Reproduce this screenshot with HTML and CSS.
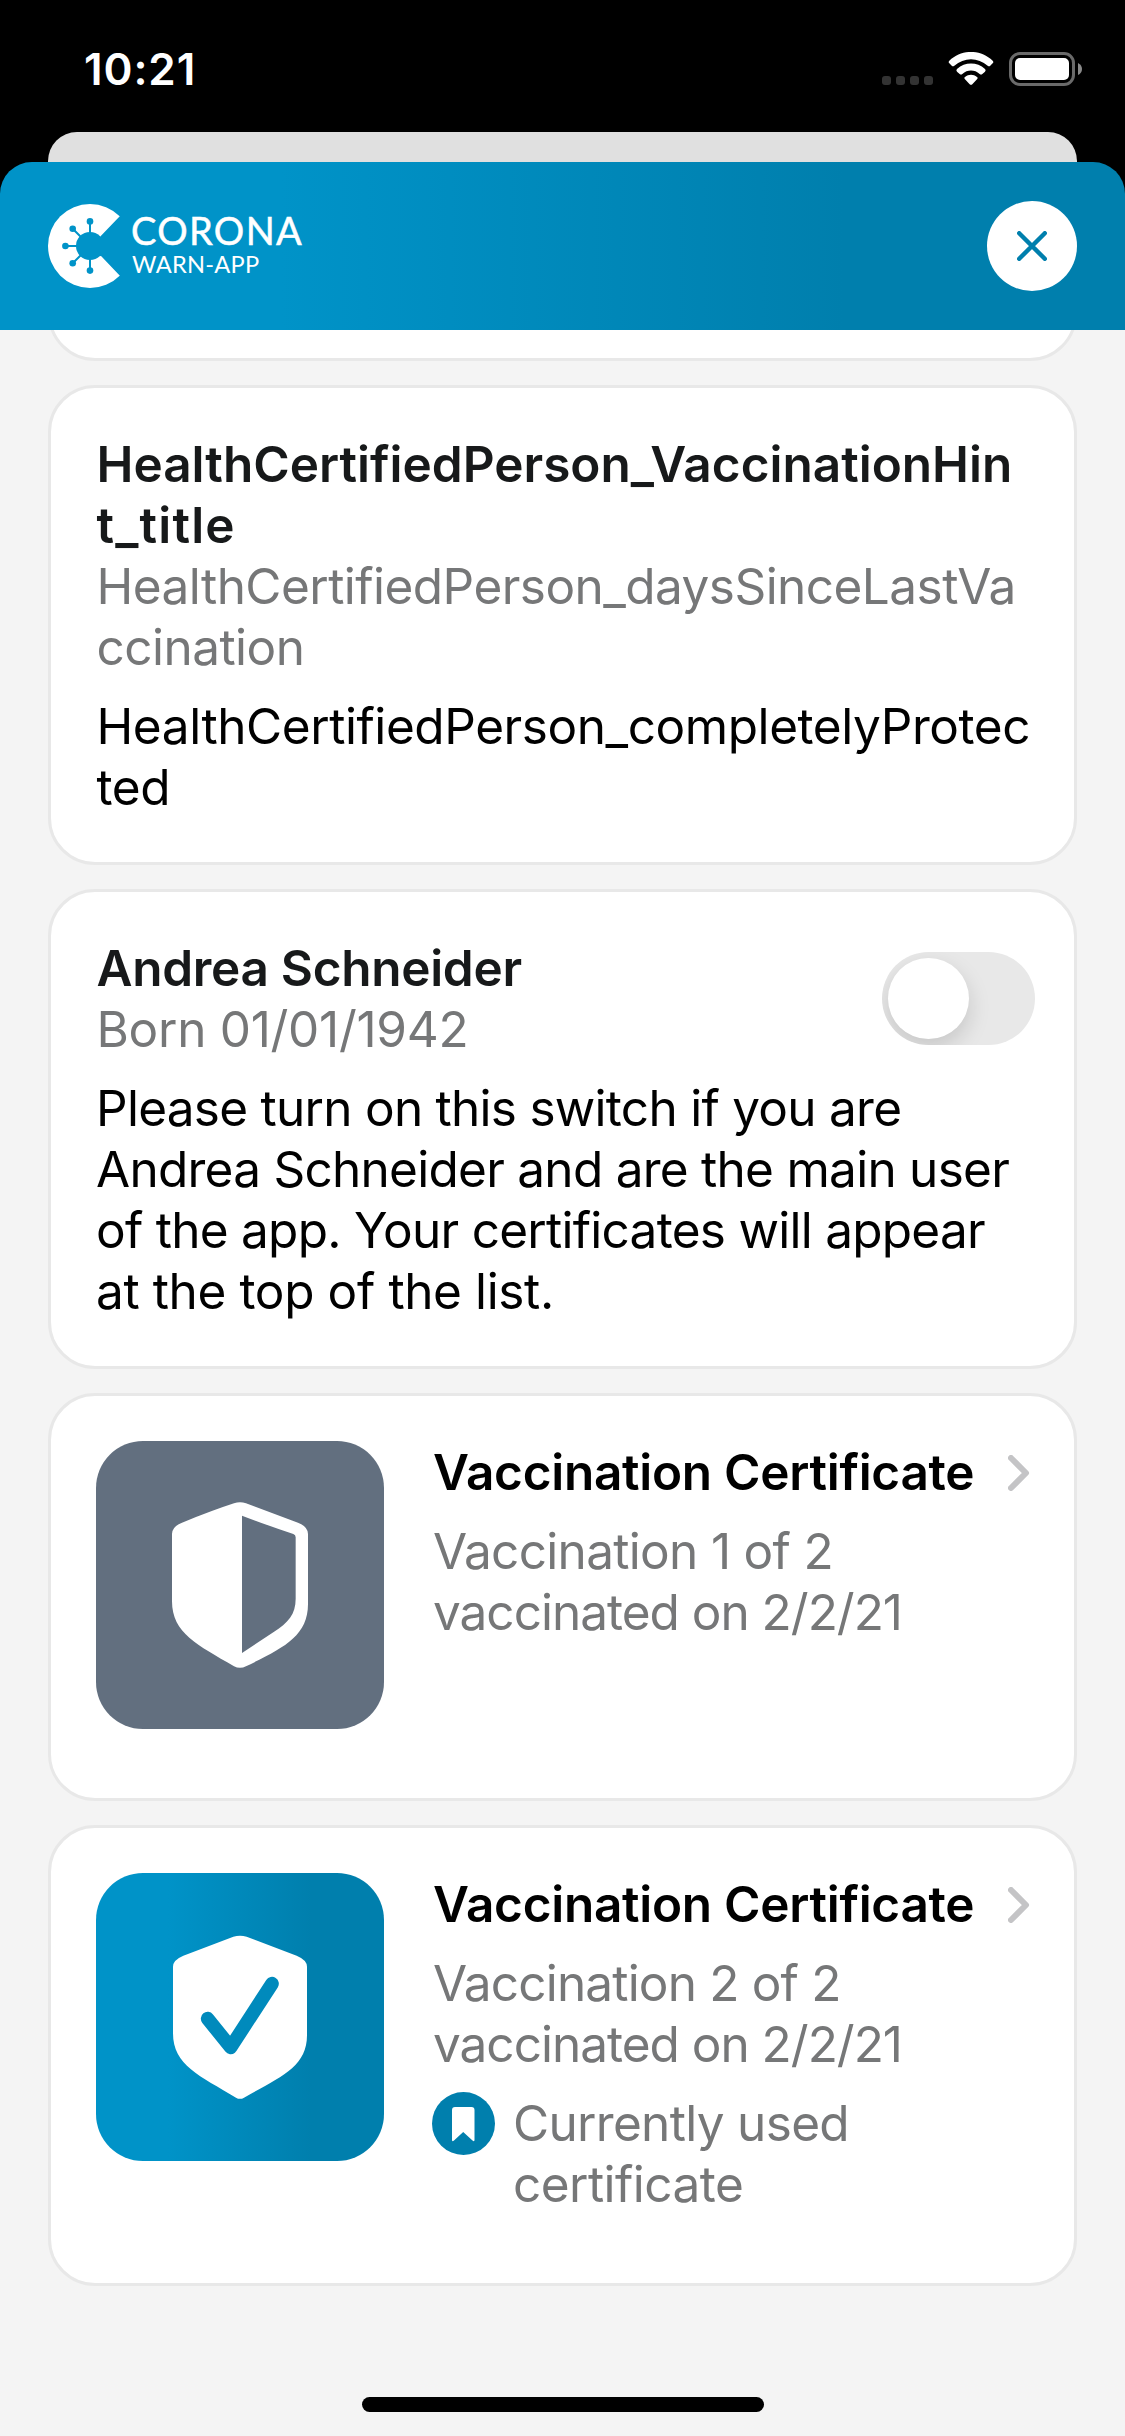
FILE: index.html
```
<!DOCTYPE html>
<html lang="en">
<head>
<meta charset="utf-8">
<title>Corona-Warn-App</title>
<link rel="stylesheet" href="styles.css">
</head>
<body>
<div class="status">
  <span class="time">10:21</span>
  <div class="indicators">
    <div class="dots"><i></i><i></i><i></i><i></i></div>
    <svg class="wifi" viewBox="0 0 138 99">
      <g fill="#fff">
        <path d="M4 26C41-9 97-9 134 26Q138 30 134 34L126 42Q123 44 119 41C90 15 48 15 19 41Q15 44 12 42L4 34Q0 30 4 26Z"/>
        <path d="M27 51C51 29 87 29 111 51Q115 55 111 59L103 66Q99 69 95 66C80 52 58 52 43 66Q39 69 35 66L27 59Q23 55 27 51Z"/>
        <path d="M51 75C62 66 76 66 87 75Q91 78 87 82L73 97Q69 100 65 97L51 82Q47 78 51 75Z"/>
      </g>
    </svg>
    <svg class="battery" viewBox="0 0 73 34">
      <rect x="1.5" y="1.5" width="63" height="31" rx="9.5" fill="none" stroke="#6a6a6a" stroke-width="3"/>
      <rect x="6" y="6" width="54" height="22" rx="5" fill="#fff"/>
      <path d="M69 11Q73 13 73 17T69 23Z" fill="#8a8a8a"/>
    </svg>
  </div>
</div>
<div class="backdrop"></div>
<div class="sheet">
  <header class="header">
    <div class="logo">
      <svg class="mark" viewBox="0 0 84 84">
        <mask id="bite">
          <rect width="84" height="84" fill="#fff"/>
          <g fill="#000" stroke="#000">
            <circle cx="42" cy="42" r="14" stroke="none"/>
            <path d="M52 33L52.8 32Q71 13 74 10H86V74H74L53.3 52.3Q52.3 51.6 51.5 52.3L42 42Z" stroke="none"/>
            <path d="M42 42V17.5M42 42L24.7 24.7M42 42H17.5M42 42L24.7 59.3M42 42V66.5" stroke-width="2"/>
            <circle cx="42" cy="17.4" r="3.3" stroke="none"/>
            <circle cx="24.7" cy="24.7" r="3.3" stroke="none"/>
            <circle cx="17.4" cy="42" r="3.3" stroke="none"/>
            <circle cx="24.7" cy="59.3" r="3.3" stroke="none"/>
            <circle cx="42" cy="66.6" r="3.3" stroke="none"/>
          </g>
        </mask>
        <circle cx="42" cy="42" r="42" fill="#fff" mask="url(#bite)"/>
      </svg>
      <div class="wordmark"><span class="word-top">CORONA</span><span class="word-bottom">WARN-APP</span></div>
    </div>
    <button class="close" aria-label="Close">
      <svg viewBox="0 0 30 30"><path d="M2.2 2.2L27.8 27.8M27.8 2.2L2.2 27.8" stroke="#007fad" stroke-width="4.4" stroke-linecap="round"/></svg>
    </button>
  </header>
  <main class="list">
    <section class="card card-cut"></section>

    <section class="card">
      <div class="text">
        <h2 class="title ls-key">HealthCertifiedPerson_VaccinationHin<br><span class="ls-wide">t_title</span></h2>
        <p class="muted ls-half">HealthCertifiedPerson_daysSinceLastVa<br>ccination</p>
        <p class="body ls-body-key">HealthCertifiedPerson_completelyProtec<br>ted</p>
      </div>
    </section>

    <section class="card">
      <div class="person">
        <div>
          <h2 class="title ls-name">Andrea Schneider</h2>
          <p class="muted ls-born">Born 01/01/1942</p>
        </div>
        <div class="switch"><span class="knob"></span></div>
      </div>
      <p class="body ls-text">Please turn on this switch if you are<br>Andrea Schneider and are the main user<br>of the app. Your certificates will appear<br><span class="ls-last">at the top of the list.</span></p>
    </section>

    <section class="card cert">
      <div class="tile tile-grey">
        <svg viewBox="168 183 864 864">
          <path fill="#fff" fill-rule="evenodd" d="M582 370Q600 363 618 370L774 428Q804 440 804 462V672C804 770 727 805 618 859Q600 868 582 859C473 795 396 760 396 664V462Q396 440 426 428Q520 390 582 370ZM606 407V819L700 757C745 727 767 703 767 656V472Q767 465 760 462Q690 439 606 407Z"/>
        </svg>
      </div>
      <div class="info">
        <div class="head"><h2 class="title black ls-cert">Vaccination Certificate</h2>
          <svg class="chevron" viewBox="0 0 22 36"><path d="M3 3L18 18L3 33"/></svg></div>
        <p class="muted second"><span class="ls-dose">Vaccination 1 of 2</span><br><span class="ls-date">vaccinated on 2/2/21</span></p>
      </div>
    </section>

    <section class="card cert">
      <div class="tile tile-blue">
        <svg viewBox="168 189 864 864">
          <path fill="#fff" d="M580 380Q600 374 620 380L770 437Q801 450 801 470V676C801 772 720 802 612 863Q600 870 588 863C480 798 399 766 399 670V470Q399 450 430 437Z"/>
          <path d="M503 626L572 712L696 521" fill="none" stroke="#008abc" stroke-width="41" stroke-linecap="round" stroke-linejoin="round"/>
        </svg>
      </div>
      <div class="info">
        <div class="head"><h2 class="title black ls-cert">Vaccination Certificate</h2>
          <svg class="chevron" viewBox="0 0 22 36"><path d="M3 3L18 18L3 33"/></svg></div>
        <p class="muted second"><span class="ls-dose2">Vaccination 2 of 2</span><br><span class="ls-date">vaccinated on 2/2/21</span></p>
        <div class="used">
          <svg class="badge" viewBox="0 0 63 63"><circle cx="31.5" cy="31.5" r="31.5" fill="#007fad"/><path fill="#fff" d="M20 18Q20 15 23 15H39.500Q42.500 15 42.500 18V48Q42.500 50 40.500 48.500L31.200 40L22 48.500Q20 50 20 48Z"/></svg>
          <p class="muted"><span class="ls-dose">Currently used</span><br><span class="ls-half">certificate</span></p>
        </div>
      </div>
    </section>
  </main>
  <div class="home"></div>
</div>
</body>
</html>
```
FILE: styles.css
```
* { box-sizing: border-box; margin: 0; padding: 0; }

body {
  width: 1125px;
  height: 2436px;
  overflow: hidden;
  background: #000;
  font-family: Inter, "Liberation Sans", sans-serif;
  display: flex;
  flex-direction: column;
}

/* Status bar */
.status {
  height: 132px;
  flex: none;
  display: flex;
  justify-content: space-between;
  padding: 0 43px 0 84px;
}
.time {
  color: #fff;
  font-size: 44px;
  font-weight: 600;
  letter-spacing: 0.9px;
  line-height: 138px;
}
.indicators { display: flex; height: 34px; margin-top: 52px; }
.dots { display: flex; gap: 5px; margin: 24px 15px 0 0; }
.dots i { width: 9px; height: 9px; border-radius: 3px; background: #333; }
.wifi { width: 46px; height: 33px; margin-right: 15px; }
.battery { width: 73px; height: 34px; }

/* Sheet */
.backdrop {
  height: 30px;
  flex: none;
  margin: 0 48px;
  background: #e0e0e0;
  border-radius: 29px 29px 0 0;
}
.sheet { flex: 1; min-height: 0; display: flex; flex-direction: column; }
.header {
  height: 168px;
  flex: none;
  display: flex;
  align-items: center;
  justify-content: space-between;
  padding: 0 48px;
  border-radius: 32px 32px 0 0;
  background: linear-gradient(90deg, #0093c8 25%, #007fad 75%);
}
.logo { display: flex; align-items: center; }
.mark { width: 84px; height: 84px; }
.wordmark {
  height: 84px;
  padding-top: 7px;
  display: flex;
  flex-direction: column;
  color: #fff;
  font-family: Lato, sans-serif;
}
.word-top {
  margin-left: -1px;
  font-size: 38px;
  line-height: 38px;
  letter-spacing: 1.35px;
  -webkit-text-stroke: 0.5px #fff;
}
.word-bottom { font-size: 23.6px; line-height: 30px; letter-spacing: 0.27px; }
.close {
  width: 90px;
  height: 90px;
  border: 0;
  border-radius: 50%;
  background: #fff;
  display: grid;
  place-items: center;
}
.close svg { width: 30px; height: 30px; }

/* Scrolled list */
.list {
  height: 2067px;
  flex: none;
  overflow: hidden;
  background: #f4f4f4;
  padding: 0 48px;
  display: flex;
  flex-direction: column;
  gap: 24px;
}
.card {
  flex: none;
  background: #fff;
  border: 3px solid #e8e8e8;
  border-radius: 47px;
  padding: 46px 45px 44px;
}
.card-cut { height: 120px; margin-top: -89px; }
.title, .muted, .body { font-size: 49.5px; line-height: 61px; white-space: nowrap; }
.title { font-weight: 600; color: #17191a; }
.title.black { color: #000; }
.muted { color: #767778; }
.body { color: #000; margin-top: 18px; }

.text { padding-left: 0.5px; }
.person { display: flex; justify-content: space-between; padding-left: 0.5px; }
.switch {
  width: 153px;
  height: 93px;
  margin: 14px -6px 0 0;
  padding: 6px;
  border-radius: 47px;
  background: #e8e8e8;
  overflow: hidden;
}
.knob {
  display: block;
  width: 81px;
  height: 81px;
  border-radius: 50%;
  background: #fff;
  box-shadow: 0 9px 22px rgba(0, 0, 0, 0.15);
}

.cert { display: flex; padding: 45px 45px 68px; }
.tile { width: 288px; height: 288px; flex: none; border-radius: 47px; }
.tile svg { display: block; width: 288px; height: 288px; }
.tile-grey { background: #626f7f; }
.tile-blue { background: linear-gradient(90deg, #0093c8 25%, #007fad 75%); }
.info { flex: 1; margin-left: 49px; padding-top: 1px; }
.cert:nth-child(4) { padding-bottom: 69px; }
.head { display: flex; justify-content: space-between; align-items: center; }
.chevron { width: 22px; height: 36px; margin-right: -1px; }
.chevron path {
  fill: none;
  stroke: #c4c4c6;
  stroke-width: 6;
  stroke-linecap: round;
  stroke-linejoin: round;
}
.second { margin-top: 18px; }
.used { display: flex; gap: 18px; margin-top: 18px; }
.badge { width: 63px; height: 63px; flex: none; margin: -1px 0 0 -1px; }

/* Tracking */
.ls-key { letter-spacing: 0.01px; }
.ls-wide { letter-spacing: 1.2px; }
.ls-half { letter-spacing: -0.54px; }
.ls-body-key { letter-spacing: -0.43px; }
.ls-name { letter-spacing: -0.3px; }
.ls-born { letter-spacing: -0.28px; }
.ls-text { letter-spacing: -0.73px; }
.ls-last { letter-spacing: -0.38px; }
.ls-cert { letter-spacing: -0.27px; }
.ls-dose { letter-spacing: -0.68px; }
.ls-dose2 { letter-spacing: -0.82px; }
.ls-date { letter-spacing: -1px; }

/* Home indicator */
.home {
  flex: 1;
  background: #f4f4f4;
}
.home::before {
  content: "";
  display: block;
  width: 402px;
  height: 15px;
  margin: 0 auto;
  border-radius: 8px;
  background: #000;
}
```
